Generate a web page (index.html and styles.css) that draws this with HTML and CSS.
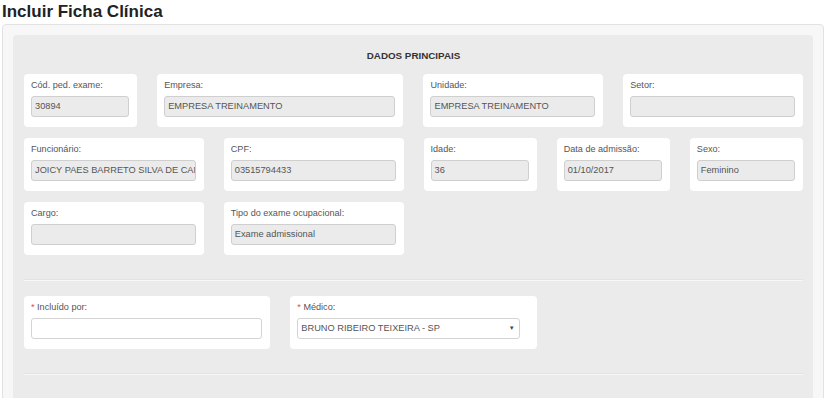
FILE: index.html
```html
<!DOCTYPE html>
<html lang="pt-BR">
<head>
    <meta charset="UTF-8">
    <meta name="viewport" content="width=device-width, initial-scale=1.0">
    <title>Incluir Ficha Clínica</title>
    <link rel="stylesheet" href="styles.css">
</head>
<body>
    <h1 class="page-title">Incluir Ficha Clínica</h1>

    <div class="frame">
        <div class="panel">
            <h2 class="section-title">DADOS PRINCIPAIS</h2>

            <div class="row">
                <div class="col col-2">
                    <div class="card">
                        <label>Cód. ped. exame:</label>
                        <div class="field">30894</div>
                    </div>
                </div>
                <div class="col col-4">
                    <div class="card">
                        <label>Empresa:</label>
                        <div class="field">EMPRESA TREINAMENTO</div>
                    </div>
                </div>
                <div class="col col-3">
                    <div class="card">
                        <label>Unidade:</label>
                        <div class="field">EMPRESA TREINAMENTO</div>
                    </div>
                </div>
                <div class="col col-3">
                    <div class="card">
                        <label>Setor:</label>
                        <div class="field"></div>
                    </div>
                </div>
            </div>

            <div class="row">
                <div class="col col-3">
                    <div class="card">
                        <label>Funcionário:</label>
                        <div class="field">JOICY PAES BARRETO SILVA DE CAMPOS</div>
                    </div>
                </div>
                <div class="col col-3">
                    <div class="card">
                        <label>CPF:</label>
                        <div class="field">03515794433</div>
                    </div>
                </div>
                <div class="col col-2">
                    <div class="card">
                        <label>Idade:</label>
                        <div class="field">36</div>
                    </div>
                </div>
                <div class="col col-2">
                    <div class="card">
                        <label>Data de admissão:</label>
                        <div class="field">01/10/2017</div>
                    </div>
                </div>
                <div class="col col-2">
                    <div class="card">
                        <label>Sexo:</label>
                        <div class="field">Feminino</div>
                    </div>
                </div>
            </div>

            <div class="row">
                <div class="col col-3">
                    <div class="card">
                        <label>Cargo:</label>
                        <div class="field"></div>
                    </div>
                </div>
                <div class="col col-3">
                    <div class="card">
                        <label>Tipo do exame ocupacional:</label>
                        <div class="field">Exame admissional</div>
                    </div>
                </div>
            </div>

            <hr class="divider">

            <div class="row">
                <div class="col col-4">
                    <div class="card">
                        <label><span class="req">*</span> Incluído por:</label>
                        <div class="field editable"></div>
                    </div>
                </div>
                <div class="col col-4">
                    <div class="card">
                        <label><span class="req">*</span> Médico:</label>
                        <div class="field editable select">
                            <span>BRUNO RIBEIRO TEIXEIRA - SP</span>
                            <span class="caret">&#9660;</span>
                        </div>
                    </div>
                </div>
            </div>

            <hr class="divider">
        </div>
    </div>
</body>
</html>
```

FILE: styles.css
```css
html, body {
    height: 100%;
    overflow: hidden;
}

body {
    font-family: Arial, "Liberation Sans", sans-serif;
    margin: 0;
    padding: 0 6px 0 2px;
    background-color: #fff;
    color: #555;
}

.page-title {
    margin: 0;
    padding-top: 2px;
    height: 22px;
    font-size: 17px;
    line-height: 20px;
    color: #222;
}

.frame {
    background-color: #f7f7f7;
    border: 1px solid #e2e2e2;
    border-radius: 4px;
    padding: 10px 10px 0 10px;
    height: 400px;
}

.panel {
    background-color: #ebebeb;
    border-radius: 4px;
    padding: 15px 0 0 1px;
    height: 400px;
}

.section-title {
    margin: 0 0 12px 0;
    text-align: center;
    font-size: 9.8px;
    line-height: 12px;
    color: #333;
}

.row {
    display: flex;
    margin-bottom: 11px;
}

.col {
    padding: 0 10px;
    box-sizing: border-box;
}

.col-2 { width: 16.6667%; }
.col-3 { width: 25%; }
.col-4 { width: 33.3333%; }

.card {
    background-color: #fff;
    border-radius: 4px;
    padding: 5px 8px 9px 7px;
    height: 53px;
    box-sizing: border-box;
}

.card label {
    display: block;
    font-size: 9.1px;
    line-height: 12px;
    margin-bottom: 5px;
    color: #555;
}

.field {
    height: 21px;
    box-sizing: border-box;
    border: 1px solid #cfcfcf;
    border-radius: 3px;
    background-color: #ebebeb;
    padding: 0 3px;
    font-size: 9.25px;
    line-height: 19px;
    color: #555;
    white-space: nowrap;
    overflow: hidden;
}

.field.editable {
    background-color: #fff;
    border-color: #d4d4d4;
}

.select {
    display: flex;
    justify-content: space-between;
    margin-right: 9px;
    padding: 0 4px 0 3px;
}

.caret {
    font-size: 6px;
    color: #444;
}

.req {
    color: #d9534f;
}

.divider {
    border: none;
    border-top: 1px solid #e3e3e3;
    border-bottom: 1px solid #f7f7f7;
    margin: 24px 10px 15px 10px;
}
```
